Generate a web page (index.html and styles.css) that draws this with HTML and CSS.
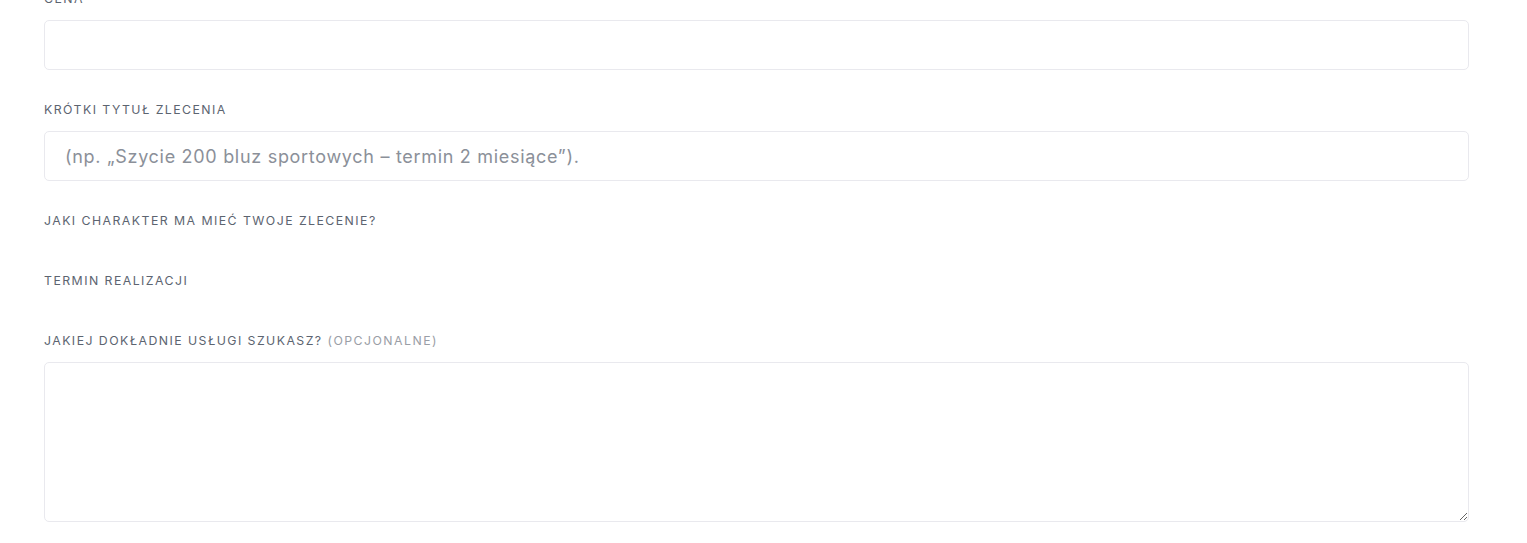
FILE: index.html
```html
<!DOCTYPE html>
<html lang="pl">
<head>
<meta charset="utf-8">
<title>Formularz zlecenia</title>
<link rel="stylesheet" href="styles.css">
</head>
<body>
<form class="form">
  <div class="field">
    <label class="label" for="cena">Cena</label>
    <input class="input" id="cena" type="text">
  </div>
  <div class="field">
    <label class="label" for="tytul">Krótki tytuł zlecenia</label>
    <input class="input" id="tytul" type="text" placeholder="(np. „Szycie 200 bluz sportowych – termin 2 miesiące”).">
  </div>
  <div class="field field-empty">
    <label class="label">Jaki charakter ma mieć Twoje zlecenie?</label>
  </div>
  <div class="field field-empty">
    <label class="label">Termin realizacji</label>
  </div>
  <div class="field">
    <label class="label" for="usluga">Jakiej dokładnie usługi szukasz? <span class="optional">(opcjonalne)</span></label>
    <textarea class="textarea" id="usluga"></textarea>
  </div>
</form>
</body>
</html>
```
FILE: styles.css
```css
html, body {
  margin: 0;
  padding: 0;
  background: #ffffff;
}
body {
  font-family: "Inter", "Liberation Sans", sans-serif;
  color: #5c6470;
}
.form {
  margin: -10px 58px 0 44px;
  display: flex;
  flex-direction: column;
}
.field {
  display: flex;
  flex-direction: column;
  margin-bottom: 31px;
}
.field-empty {
  margin-bottom: 30px;
}
.label {
  display: block;
  font-size: 12.3px;
  line-height: 18px;
  letter-spacing: 1.45px;
  text-transform: uppercase;
  color: #5c6470;
  margin-bottom: 12px;
}
.optional {
  color: #9a9ea6;
}
.input, .textarea {
  box-sizing: border-box;
  width: 100%;
  border: 1px solid #e9e9ee;
  border-radius: 5px;
  background: #ffffff;
  font-family: "Inter", "Liberation Sans", sans-serif;
  font-size: 18px;
  letter-spacing: 0.7px;
  color: #5c6470;
  outline: none;
  margin: 0;
}
.input {
  height: 50px;
  padding: 1px 20px 0;
}
.input::placeholder {
  color: #8b9099;
  opacity: 1;
}
.textarea {
  height: 160px;
  padding: 12px 20px;
  resize: vertical;
  display: block;
}
```
